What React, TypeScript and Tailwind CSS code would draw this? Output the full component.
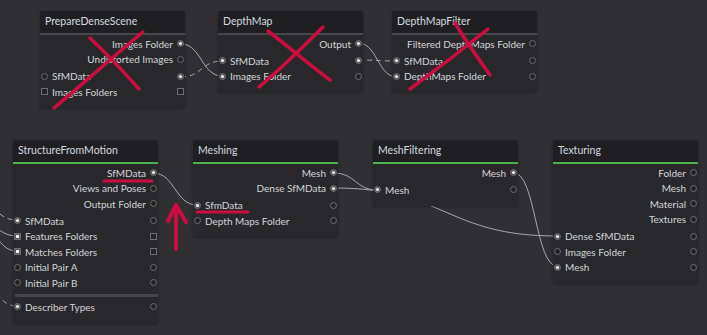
import React from "react";

type Port = "c" | "cf" | "s" | "sf" | "none";
type Attr = { label: string; left?: Port; right: Port };
type NodeDef = {
  title: string;
  x: number;
  y: number;
  active?: boolean;
  outputs: Attr[];
  inputs: Attr[];
  extra?: Attr[];
};

const nodes: NodeDef[] = [
  {
    title: "PrepareDenseScene",
    x: 40,
    y: 11,
    outputs: [
      { label: "Images Folder", right: "cf" },
      { label: "Undistorted Images", right: "c" },
    ],
    inputs: [
      { label: "SfMData", left: "c", right: "cf" },
      { label: "Images Folders", left: "s", right: "s" },
    ],
  },
  {
    title: "DepthMap",
    x: 218,
    y: 11,
    outputs: [{ label: "Output", right: "cf" }],
    inputs: [
      { label: "SfMData", left: "cf", right: "cf" },
      { label: "Images Folder", left: "cf", right: "c" },
    ],
  },
  {
    title: "DepthMapFilter",
    x: 392,
    y: 11,
    outputs: [{ label: "Filtered DepthMaps Folder", right: "c" }],
    inputs: [
      { label: "SfMData", left: "cf", right: "c" },
      { label: "DepthMaps Folder", left: "cf", right: "c" },
    ],
  },
  {
    title: "StructureFromMotion",
    x: 13,
    y: 140,
    active: true,
    outputs: [
      { label: "SfMData", right: "cf" },
      { label: "Views and Poses", right: "c" },
      { label: "Output Folder", right: "c" },
    ],
    inputs: [
      { label: "SfMData", left: "cf", right: "c" },
      { label: "Features Folders", left: "sf", right: "s" },
      { label: "Matches Folders", left: "sf", right: "s" },
      { label: "Initial Pair A", left: "c", right: "c" },
      { label: "Initial Pair B", left: "c", right: "c" },
    ],
    extra: [{ label: "Describer Types", left: "cf", right: "c" }],
  },
  {
    title: "Meshing",
    x: 193,
    y: 140,
    active: true,
    outputs: [
      { label: "Mesh", right: "cf" },
      { label: "Dense SfMData", right: "cf" },
    ],
    inputs: [
      { label: "SfmData", left: "cf", right: "c" },
      { label: "Depth Maps Folder", left: "c", right: "c" },
    ],
  },
  {
    title: "MeshFiltering",
    x: 373,
    y: 140,
    active: true,
    outputs: [{ label: "Mesh", right: "cf" }],
    inputs: [{ label: "Mesh", left: "cf", right: "c" }],
  },
  {
    title: "Texturing",
    x: 553,
    y: 140,
    active: true,
    outputs: [
      { label: "Folder", right: "c" },
      { label: "Mesh", right: "c" },
      { label: "Material", right: "c" },
      { label: "Textures", right: "c" },
    ],
    inputs: [
      { label: "Dense SfMData", left: "cf", right: "c" },
      { label: "Images Folder", left: "c", right: "c" },
      { label: "Mesh", left: "cf", right: "c" },
    ],
  },
];

// edges: [x1, y1, x2, y2, dashed]
const edges: [number, number, number, number, boolean][] = [
  [181, 44, 222, 76, false],
  [181, 77, 222, 61, true],
  [358, 43, 397, 77, false],
  [358, 60, 397, 61, true],
  [153, 173, 197, 205, false],
  [334, 173, 377, 190, false],
  [334, 188, 557, 236, false],
  [514, 173, 557, 266, false],
  [-30, 196, 17, 220, true],
  [-30, 214, 17, 236, false],
  [-30, 214, 17, 251, false],
  [-30, 272, 17, 306, true],
];

function edgePath(x1: number, y1: number, x2: number, y2: number) {
  const c = Math.max(Math.abs(x2 - x1) / 2, 18);
  return `M${x1} ${y1} C${x1 + c} ${y1}, ${x2 - c} ${y2}, ${x2} ${y2}`;
}

function PortDot({ kind }: { kind: Port }) {
  if (kind === "none") return <span className="w-[7px] h-[7px]" />;
  const square = kind === "s" || kind === "sf";
  const filled = kind === "cf" || kind === "sf";
  return (
    <span
      className={`shrink-0 flex items-center justify-center w-[7px] h-[7px] border border-[#6f6f73] ${
        square ? "rounded-none" : "rounded-full"
      } ${filled ? "bg-[#55555a]" : "bg-[#232325]"}`}
    >
      {filled && (
        <span
          className={`w-[3px] h-[3px] bg-[#f2f2f2] ${square ? "" : "rounded-full"}`}
        />
      )}
    </span>
  );
}

function OutRow({ a }: { a: Attr }) {
  return (
    <div className="h-[15.5px] flex items-center justify-end gap-[4px] pr-[1px]">
      <span className="leading-none whitespace-nowrap">{a.label}</span>
      <PortDot kind={a.right} />
    </div>
  );
}

function InRow({ a }: { a: Attr }) {
  return (
    <div className="h-[15.5px] flex items-center gap-[4px] px-[1px]">
      <PortDot kind={a.left ?? "none"} />
      <span className="leading-none flex-1 whitespace-nowrap">{a.label}</span>
      <PortDot kind={a.right} />
    </div>
  );
}

function GraphNode({ n }: { n: NodeDef }) {
  return (
    <div
      className="absolute w-[145px] rounded-[3px] bg-[#28282b] shadow-[0_1px_3px_rgba(0,0,0,0.35)] overflow-hidden"
      style={{ left: n.x, top: n.y }}
    >
      <div className="h-[22px] flex items-center px-[5px] bg-[#1f1f21] text-[10.5px] text-[#d3dbe0]">
        {n.title}
      </div>
      <div className={`h-[2px] ${n.active ? "bg-[#4caf50]" : "bg-[#48484c]"}`} />
      <div className="pt-[1px] pb-[8px] text-[10px] text-[#d2d7db]">
        {n.outputs.map((a, i) => (
          <OutRow key={"o" + i} a={a} />
        ))}
        <div className="h-[1.5px]" />
        {n.inputs.map((a, i) => (
          <InRow key={"i" + i} a={a} />
        ))}
        {n.extra && (
          <>
            <div className="mt-[3px] mb-[2.5px] ml-[2px] h-[3px] bg-[#46464a]" />
            {n.extra.map((a, i) => (
              <InRow key={"e" + i} a={a} />
            ))}
          </>
        )}
      </div>
    </div>
  );
}

export default function App() {
  return (
    <div className="relative w-[707px] h-[335px] overflow-hidden bg-[#303033] font-['Lato',sans-serif]">
      {/* connections, drawn under the nodes */}
      <svg className="absolute inset-0" width={707} height={335}>
        {edges.map(([x1, y1, x2, y2, dashed], i) => (
          <path
            key={i}
            d={edgePath(x1, y1, x2, y2)}
            fill="none"
            stroke="#a9a9ad"
            strokeWidth={1}
            strokeDasharray={dashed ? "5 4" : undefined}
          />
        ))}
      </svg>

      {nodes.map((n) => (
        <GraphNode key={n.title} n={n} />
      ))}

      {/* red annotations */}
      <svg className="absolute inset-0 pointer-events-none" width={707} height={335}>
        <g stroke="#cc0d3f" strokeWidth={3.5} strokeLinecap="round" fill="none">
          <path d="M90 38 C105 52, 122 70, 139 89" />
          <path d="M143 32 C115 55, 85 82, 54 108" />
          <path d="M268 31 C290 48, 310 65, 330 80" />
          <path d="M323 27 C302 48, 282 68, 259 87" />
          <path d="M455 23 C465 40, 478 58, 490 75" />
          <path d="M488 29 C462 50, 436 70, 410 89" />
          <path d="M104 181 L152 181" strokeWidth={3} />
          <path d="M197 212 L248 212" strokeWidth={3} />
          <path d="M176 249 L176 206" strokeWidth={4} />
          <path d="M168 221 L176 205 L186 222" strokeWidth={4} strokeLinejoin="round" />
        </g>
      </svg>
    </div>
  );
}
